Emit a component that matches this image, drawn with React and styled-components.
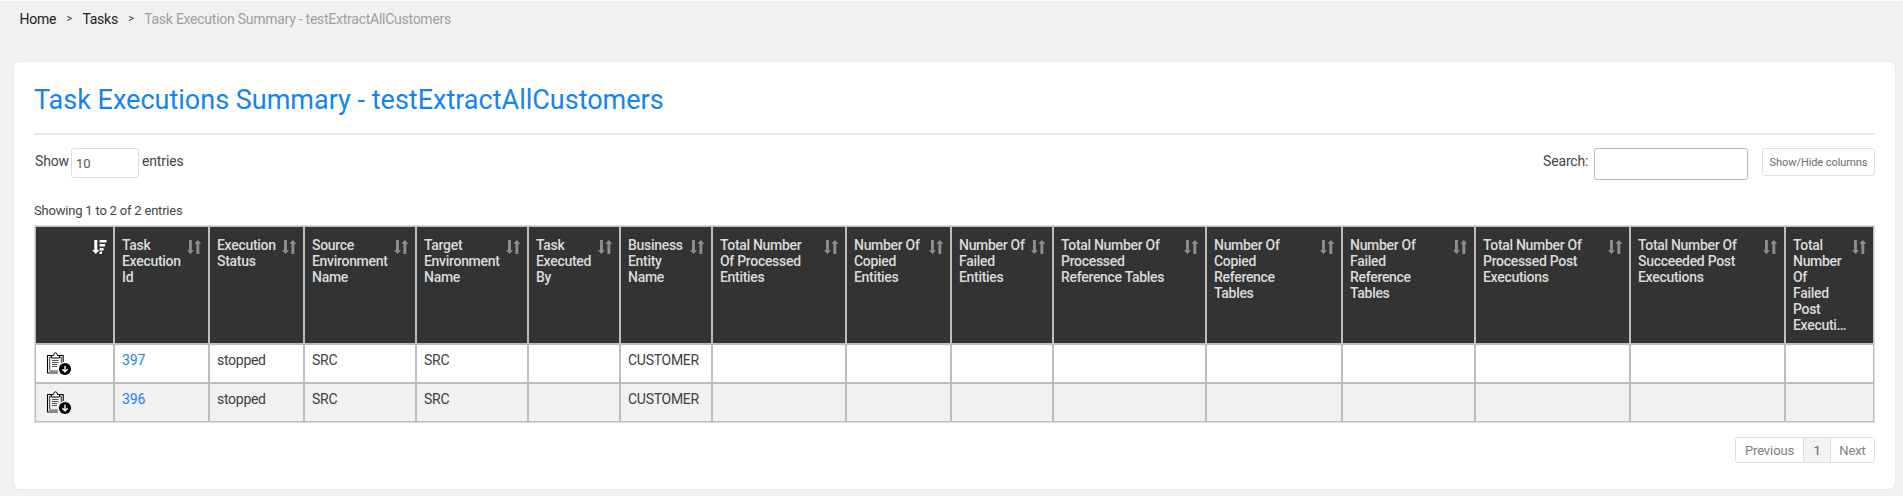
import React from "react";
import styled, { createGlobalStyle } from "styled-components";

const GlobalStyle = createGlobalStyle`
  * { box-sizing: border-box; }
  body {
    margin: 0;
    background: #f1f1f1;
    font-family: Roboto, "Liberation Sans", sans-serif;
    font-size: 14px;
    color: #333;
  }
`;

const Page = styled.div`
  height: 496px;
  overflow: hidden;
  border-top: 1px solid #fff;
  background: #f1f1f1;
`;

const Breadcrumb = styled.nav`
  display: flex;
  align-items: center;
  height: 30px;
  padding: 6px 0 0 19.5px;
  line-height: 16px;
`;

const Crumb = styled.a`
  color: ${(p) => (p.$current ? "#9f9f9f" : "#222")};
  letter-spacing: -0.26px;
`;

const CrumbSeparator = styled.span`
  width: 26.3px;
  text-align: center;
  font-size: 11px;
  color: #333;
`;

const Card = styled.main`
  width: 1883px;
  height: 429px;
  margin: 30px 0 0 13px;
  padding: 0 20px;
  border: 1px solid #e9e9e9;
  border-radius: 7px;
  background: #fff;
`;

const Title = styled.h1`
  height: 73px;
  margin: 0;
  padding-top: 20px;
  border-bottom: 2px solid #e8e8e8;
  font-size: 27px;
  font-weight: 400;
  line-height: 36px;
  color: #1683f2;
`;

const Toolbar = styled.div`
  display: flex;
  align-items: flex-start;
  height: 55px;
  padding-top: 13px;
`;

const ToolLabel = styled.span`
  width: ${(p) => p.$width}px;
  padding: ${(p) => p.$pad || "5px 0 0 1px"};
  line-height: 16px;
  letter-spacing: -0.15px;
  color: #444;
`;

const LengthSelect = styled.div`
  width: 68px;
  height: 30px;
  padding: 7px 4px;
  border: 1px solid #dedede;
  border-radius: 3px;
  font-size: 13px;
  line-height: 16px;
  color: #555;
`;

const ToolSpacer = styled.div`
  flex: 1;
`;

const SearchInput = styled.input`
  width: 154px;
  height: 32px;
  margin-right: 14px;
  border: 1px solid #b5b5b5;
  border-radius: 3px;
  background: #fff;
`;

const ColumnsButton = styled.button`
  width: 113px;
  height: 28px;
  padding: 2px 0 0;
  border: 1px solid #e1e1e1;
  border-radius: 3px;
  background: #fff;
  font: 400 11px/24px Roboto, sans-serif;
  letter-spacing: -0.08px;
  color: #6c6c6c;
`;

const TableInfo = styled.div`
  height: 35px;
  padding-top: 13px;
  font-size: 13px;
  line-height: 16px;
  letter-spacing: -0.2px;
  color: #444;
`;

const Grid = styled.table`
  width: 1841px;
  border: 1px solid #dedede;
  border-spacing: 0;
  table-layout: fixed;
`;

const HeaderCell = styled.th`
  width: ${(p) => p.$width}px;
  height: 118px;
  padding: 10px 7px;
  border: 1px solid #bdbdbd;
  background: #333;
  vertical-align: top;
  text-align: left;
  font-weight: 500;
  line-height: 16px;
  color: #dbdbdb;
`;

const HeaderContent = styled.div`
  display: flex;
  justify-content: space-between;
`;

const HeaderText = styled.span`
  width: 0;
  white-space: pre;
  letter-spacing: -0.3px;
`;

const SortSvg = styled.svg`
  display: block;
  flex: none;
  width: 15px;
  height: 14px;
  margin-top: 3px;
  overflow: visible;
`;

const Row = styled.tr`
  background: ${(p) => (p.$striped ? "#f1f1f1" : "#fff")};
`;

const Cell = styled.td`
  height: 39px;
  padding: ${(p) => (p.$icon ? "7px 0 0 10px" : "7px 0 0 7px")};
  border: 1px solid #bdbdbd;
  vertical-align: top;
  line-height: 16px;
  letter-spacing: -0.28px;
  color: #404040;
`;

const TaskLink = styled.a`
  letter-spacing: -0.1px;
  color: #1683f2;
`;

const ClipboardSvg = styled.svg`
  display: block;
  width: 26px;
  height: 24px;
`;

const Pagination = styled.div`
  display: flex;
  width: 140px;
  height: 26px;
  margin: 14px 0 0 auto;
  border: 1px solid #ddd;
  border-radius: 3px;
  overflow: hidden;
`;

const PageButton = styled.button`
  width: ${(p) => p.$width}px;
  padding: 1px 0 0;
  border: 0;
  border-left: ${(p) => (p.$first ? "0" : "1px solid #ddd")};
  background: ${(p) => (p.$active ? "#f3f3f3" : "#fff")};
  font: 400 13px/23px Roboto, sans-serif;
  letter-spacing: -0.1px;
  color: ${(p) => (p.$active ? "#666" : "#808080")};
`;

const columns = [
  { width: 79, label: "", sorted: true },
  { width: 95, label: "Task\nExecution\nId" },
  { width: 95, label: "Execution\nStatus" },
  { width: 112, label: "Source\nEnvironment\nName" },
  { width: 112, label: "Target\nEnvironment\nName" },
  { width: 92, label: "Task\nExecuted\nBy" },
  { width: 92, label: "Business\nEntity\nName" },
  { width: 134, label: "Total Number\nOf Processed\nEntities" },
  { width: 105, label: "Number Of\nCopied\nEntities" },
  { width: 102, label: "Number Of\nFailed\nEntities" },
  { width: 153, label: "Total Number Of\nProcessed\nReference Tables" },
  { width: 136, label: "Number Of\nCopied\nReference\nTables" },
  { width: 133, label: "Number Of\nFailed\nReference\nTables" },
  { width: 155, label: "Total Number Of\nProcessed Post\nExecutions" },
  { width: 155, label: "Total Number Of\nSucceeded Post\nExecutions" },
  { width: 89, label: "Total\nNumber\nOf\nFailed\nPost\nExecuti…" },
];

const rows = [
  { id: "397", values: ["stopped", "SRC", "SRC", "", "CUSTOMER"] },
  { id: "396", values: ["stopped", "SRC", "SRC", "", "CUSTOMER"] },
];

const EMPTY_COLUMNS = 9;

function SortIcon({ sorted }) {
  if (sorted) {
    return (
      <SortSvg viewBox="0 0 15 14" fill="#fff">
        <path d="M3.3 0h3v10h2.2L4.8 14 1.1 10h2.2z" />
        <path d="M8.6 0h7v2.4h-7zM8.6 4h5.5v2.4h-5.5zM8.6 8h4v2.4h-4zM8.6 11.6h2.4v2.4h-2.4z" />
      </SortSvg>
    );
  }
  return (
    <SortSvg viewBox="0 0 15 14" fill="#8e8e8e">
      <path d="M3 0h2.9v10.2h2.1L4.45 14 .9 10.2H3z" />
      <path d="M10.4 14h2.9V3.8h2.1L11.85 0 8.3 3.8h2.1z" />
    </SortSvg>
  );
}

function ClipboardDownloadIcon() {
  return (
    <ClipboardSvg viewBox="0 0 26 24" fill="none">
      <path d="M6 3.5H1.5V21H3M13 3.5h4.2V10" stroke="#000" strokeWidth="1.1" />
      <path d="M5.5 5.2H3.7V18.5M13.5 5.2h1.8V11" stroke="#000" strokeWidth=".8" />
      <path d="M5.5 6V3.5H7.5Q7.7.8 9.5.8T11.5 3.5H13.5V6z" fill="#fff" stroke="#000" />
      <path d="M6 8.5h6.5M6 10.5h6.5M6 12.5h5M6 14.5h5" stroke="#555" />
      <path d="M3.8 18.2h8v3.8h-9.5z" fill="#888" />
      <circle cx="19" cy="17" r="6.1" fill="#000" />
      <path d="M19 13.8v5.4M16.4 17.2l2.6 2.6 2.6-2.6" stroke="#fff" strokeWidth="1.4" />
    </ClipboardSvg>
  );
}

export default function App() {
  return (
    <Page>
      <GlobalStyle />
      <Breadcrumb>
        <Crumb>Home</Crumb>
        <CrumbSeparator>&gt;</CrumbSeparator>
        <Crumb>Tasks</Crumb>
        <CrumbSeparator>&gt;</CrumbSeparator>
        <Crumb $current>Task Execution Summary - testExtractAllCustomers</Crumb>
      </Breadcrumb>
      <Card>
        <Title>Task Executions Summary - testExtractAllCustomers</Title>
        <Toolbar>
          <ToolLabel $width={37}>Show</ToolLabel>
          <LengthSelect>10</LengthSelect>
          <ToolLabel $width={60} $pad="5px 0 0 3px">entries</ToolLabel>
          <ToolSpacer />
          <ToolLabel $width={51} $pad="5px 0 0 0">Search:</ToolLabel>
          <SearchInput aria-label="Search" />
          <ColumnsButton>Show/Hide columns</ColumnsButton>
        </Toolbar>
        <TableInfo>Showing 1 to 2 of 2 entries</TableInfo>
        <Grid>
          <thead>
            <tr>
              {columns.map((c, i) => (
                <HeaderCell key={i} $width={c.width}>
                  <HeaderContent>
                    <HeaderText>{c.label}</HeaderText>
                    <SortIcon sorted={c.sorted} />
                  </HeaderContent>
                </HeaderCell>
              ))}
            </tr>
          </thead>
          <tbody>
            {rows.map((r, i) => (
              <Row key={r.id} $striped={i % 2 === 1}>
                <Cell $icon>
                  <ClipboardDownloadIcon />
                </Cell>
                <Cell>
                  <TaskLink>{r.id}</TaskLink>
                </Cell>
                {r.values.map((v, j) => (
                  <Cell key={j}>{v}</Cell>
                ))}
                {Array.from({ length: EMPTY_COLUMNS }, (_, j) => (
                  <Cell key={`empty-${j}`} />
                ))}
              </Row>
            ))}
          </tbody>
        </Grid>
        <Pagination>
          <PageButton $first $width={67}>Previous</PageButton>
          <PageButton $active $width={27}>1</PageButton>
          <PageButton $width={44}>Next</PageButton>
        </Pagination>
      </Card>
    </Page>
  );
}
